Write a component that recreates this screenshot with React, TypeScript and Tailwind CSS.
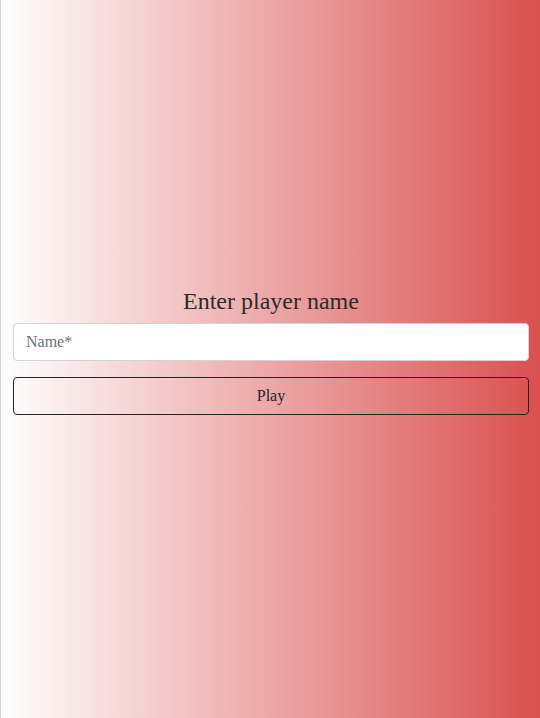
import React, { useState } from 'react';

const App: React.FC = () => {
  const [name, setName] = useState('');

  return (
    <div
      className="min-h-screen w-full border-l border-[#d6d6d6] bg-[linear-gradient(to_right,#ffffff,#d9504f)] flex flex-col justify-center pl-3 pr-[11px] text-[#212529]"
      style={{ fontFamily: '"Liberation Serif", "Times New Roman", serif' }}
    >
      <div className="pb-4">
        <h1 className="text-center text-[24px] leading-[1.2] mb-2 font-normal text-[#2b2b2b]">Enter player name</h1>
        <input
          type="text"
          value={name}
          onChange={(e) => setName(e.target.value)}
          placeholder="Name*"
          className="block w-full h-[38px] px-3 py-1.5 text-base bg-white border border-[#ced4da] rounded placeholder:text-[#6c757d] outline-none"
        />
        <button
          type="button"
          className="block w-full h-[38px] mt-4 text-base border border-[#212529] rounded bg-transparent text-[#212529]"
        >
          Play
        </button>
      </div>
    </div>
  );
};

export default App;
